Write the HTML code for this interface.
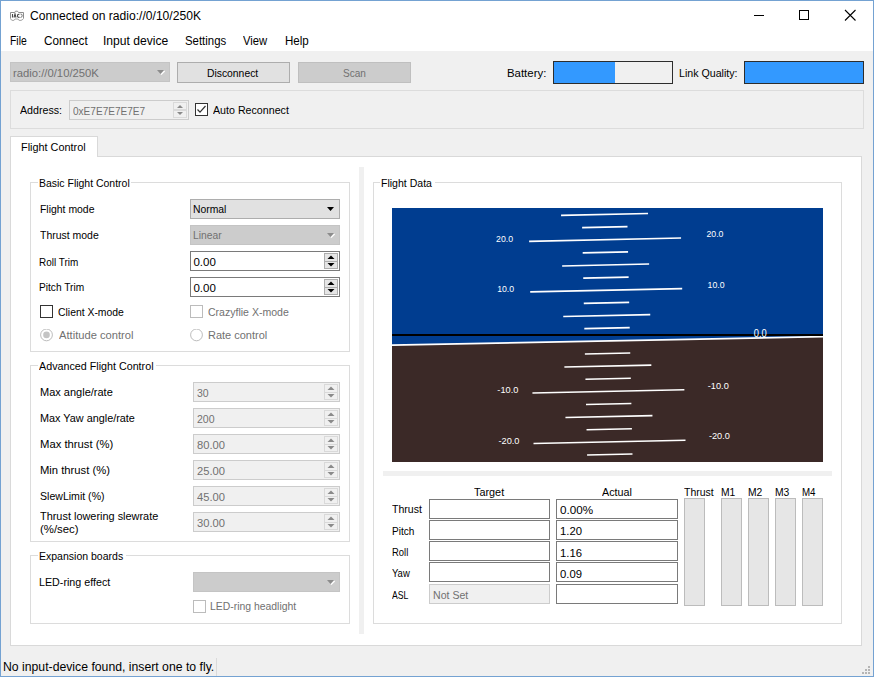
<!DOCTYPE html>
<html><head><meta charset="utf-8"><style>
html,body{margin:0;padding:0;}
body{width:874px;height:677px;position:relative;overflow:hidden;background:#f0f0f0;font-family:"Liberation Sans",sans-serif;}
.a{position:absolute;}
.t{position:absolute;white-space:nowrap;line-height:1;transform-origin:0 0;}
</style></head><body>
<div class="a" style="left:0px;top:0px;width:874px;height:51px;background:#ffffff;"></div>
<svg class="a" style="left:9px;top:10px" width="16" height="12" viewBox="0 0 16 12">
<path d="M1.5 8.5 V2.5 H5.5 L6.5 1.2 H8.5 L9.5 2.5 H14.5 V8.5" fill="none" stroke="#8d8d8d" stroke-width="1"/>
<path d="M1.5 8.5 Q2 10.5 4 10.5 Q5.5 10.5 6 9 H9 Q9.5 10.5 11 10.5 Q13.5 10.5 14.5 8.5" fill="none" stroke="#a5a5a5" stroke-width="1"/>
<path d="M3.5 4 V7.5 M5 7.5 L6 4 L7 7.5 M10.5 4.2 Q8.5 4 8.5 5.8 Q8.5 7.6 10.5 7.4" fill="none" stroke="#4a4a4a" stroke-width="1.1"/>
<path d="M11.5 4 Q13.5 4 13.2 5.8 Q13 7.5 11.5 7.5" fill="none" stroke="#777" stroke-width="1"/>
</svg>
<span class="t" style="left:30.00px;top:10.00px;font-size:12px;color:#000;transform:scaleX(1.0091);">Connected on radio://0/10/250K</span>
<div class="a" style="left:754px;top:15px;width:10px;height:1px;background:#000;"></div>
<div class="a" style="left:799px;top:10px;width:10px;height:10px;background:transparent;border:1px solid #000;box-sizing:border-box;"></div>
<svg class="a" style="left:844px;top:9px" width="13" height="13" viewBox="0 0 13 13">
<path d="M1 1 L11.5 11.5 M11.5 1 L1 11.5" stroke="#000" stroke-width="1.1"/></svg>
<span class="t" style="left:10.00px;top:35.00px;font-size:12px;color:#000;transform:scaleX(0.8646);">File</span>
<span class="t" style="left:43.60px;top:35.00px;font-size:12px;color:#000;transform:scaleX(0.9766);">Connect</span>
<span class="t" style="left:103.39px;top:35.00px;font-size:12px;color:#000;transform:scaleX(1.0088);">Input device</span>
<span class="t" style="left:185.40px;top:35.00px;font-size:12px;color:#000;transform:scaleX(0.9502);">Settings</span>
<span class="t" style="left:243.30px;top:35.00px;font-size:12px;color:#000;transform:scaleX(0.9377);">View</span>
<span class="t" style="left:284.50px;top:35.00px;font-size:12px;color:#000;transform:scaleX(0.9638);">Help</span>
<div class="a" style="left:10px;top:62px;width:160px;height:20px;background:#cccccc;border:1px solid #c4c4c4;box-sizing:border-box;"></div>
<span class="t" style="left:13.30px;top:68.00px;font-size:11.5px;color:#717171;transform:scaleX(0.9804);">radio://0/10/250K</span>
<svg class="a" style="left:157px;top:70px" width="9" height="6"><path d="M0 0 H7 L3.5 4 Z" fill="#8c8c8c"/><path d="M4 4.6 L7.6 1" stroke="#fff" stroke-width="1.3"/></svg>
<div class="a" style="left:177px;top:62px;width:113px;height:21px;background:#e1e1e1;border:1px solid #adadad;box-sizing:border-box;"></div>
<span class="t" style="left:206.60px;top:68.00px;font-size:11.5px;color:#000;transform:scaleX(0.8996);">Disconnect</span>
<div class="a" style="left:298px;top:62px;width:113px;height:21px;background:#cccccc;border:1px solid #bfbfbf;box-sizing:border-box;"></div>
<span class="t" style="left:342.50px;top:68.00px;font-size:11.5px;color:#717171;transform:scaleX(0.8754);">Scan</span>
<span class="t" style="left:506.50px;top:68.00px;font-size:11.5px;color:#000;transform:scaleX(0.9916);">Battery:</span>
<div class="a" style="left:553px;top:61px;width:120px;height:23px;background:#f0f0f0;border:1px solid #2d2d2d;box-sizing:border-box;"></div>
<div class="a" style="left:554px;top:62px;width:61px;height:21px;background:#3399ff;"></div>
<span class="t" style="left:678.60px;top:68.00px;font-size:11.5px;color:#000;transform:scaleX(0.9242);">Link Quality:</span>
<div class="a" style="left:744px;top:61px;width:120px;height:23px;background:#3399ff;border:1px solid #2d2d2d;box-sizing:border-box;"></div>
<div class="a" style="left:10px;top:90px;width:854px;height:39px;background:transparent;border:1px solid #dcdcdc;box-sizing:border-box;"></div>
<span class="t" style="left:19.90px;top:105.00px;font-size:11.5px;color:#000;transform:scaleX(0.9273);">Address:</span>
<div class="a" style="left:69px;top:100px;width:120px;height:20px;background:#f0f0f0;border:1px solid #cccccc;box-sizing:border-box;"></div>
<span class="t" style="left:72.80px;top:106.00px;font-size:11.5px;color:#717171;transform:scaleX(0.8747);">0xE7E7E7E7E7</span>
<div class="a" style="left:173px;top:102px;width:14px;height:8px;box-sizing:border-box;border:1px solid #dadada;"></div>
<div class="a" style="left:173px;top:110px;width:14px;height:8px;box-sizing:border-box;border:1px solid #dadada;"></div>
<svg class="a" style="left:173px;top:102px" width="14" height="16"><path d="M4 6 L7 3 L10 6 Z" fill="#8a8a8a"/><path d="M4 10 L10 10 L7 13 Z" fill="#8a8a8a"/></svg>
<div class="a" style="left:195px;top:103px;width:13px;height:13px;background:#ffffff;border:1px solid #333333;box-sizing:border-box;"></div>
<svg class="a" style="left:195px;top:103px" width="13" height="13"><path d="M2.5 6.5 L5 9.2 L10.5 3" fill="none" stroke="#333" stroke-width="1.2"/></svg>
<span class="t" style="left:213.00px;top:105.00px;font-size:11.5px;color:#000;transform:scaleX(0.9270);">Auto Reconnect</span>
<div class="a" style="left:10px;top:156px;width:852px;height:490px;background:#ffffff;border:1px solid #d9d9d9;box-sizing:border-box;"></div>
<div class="a" style="left:10px;top:136px;width:88px;height:21px;background:#ffffff;border:1px solid #d9d9d9;box-sizing:border-box;border-bottom:none;"></div>
<span class="t" style="left:21.30px;top:142.00px;font-size:11.5px;color:#000;transform:scaleX(0.9450);">Flight Control</span>
<div class="a" style="left:359px;top:167px;width:5px;height:467px;background:#f0f0f0;"></div>
<div class="a" style="left:30px;top:182px;width:320px;height:170px;background:transparent;border:1px solid #dcdcdc;box-sizing:border-box;"></div>
<div class="a" style="left:38px;top:180px;width:93px;height:4px;background:#ffffff;"></div>
<span class="t" style="left:38.50px;top:178.00px;font-size:11.5px;color:#000;transform:scaleX(0.9097);">Basic Flight Control</span>
<div class="a" style="left:30px;top:365px;width:320px;height:177px;background:transparent;border:1px solid #dcdcdc;box-sizing:border-box;"></div>
<div class="a" style="left:38px;top:363px;width:118px;height:4px;background:#ffffff;"></div>
<span class="t" style="left:39.00px;top:361.00px;font-size:11.5px;color:#000;transform:scaleX(0.9331);">Advanced Flight Control</span>
<div class="a" style="left:30px;top:555px;width:320px;height:69px;background:transparent;border:1px solid #dcdcdc;box-sizing:border-box;"></div>
<div class="a" style="left:38px;top:553px;width:88px;height:4px;background:#ffffff;"></div>
<span class="t" style="left:38.60px;top:551.00px;font-size:11.5px;color:#000;transform:scaleX(0.9143);">Expansion boards</span>
<div class="a" style="left:373px;top:182px;width:469px;height:442px;background:transparent;border:1px solid #dcdcdc;box-sizing:border-box;"></div>
<div class="a" style="left:380px;top:180px;width:55px;height:4px;background:#ffffff;"></div>
<span class="t" style="left:381.40px;top:178.00px;font-size:11.5px;color:#000;transform:scaleX(0.9162);">Flight Data</span>
<span class="t" style="left:39.60px;top:204.00px;font-size:11.5px;color:#000;transform:scaleX(0.9064);">Flight mode</span>
<span class="t" style="left:40.20px;top:230.00px;font-size:11.5px;color:#000;transform:scaleX(0.9103);">Thrust mode</span>
<span class="t" style="left:39.40px;top:257.00px;font-size:11.5px;color:#000;transform:scaleX(0.8647);">Roll Trim</span>
<span class="t" style="left:39.40px;top:282.00px;font-size:11.5px;color:#000;transform:scaleX(0.8829);">Pitch Trim</span>
<div class="a" style="left:190px;top:199px;width:150px;height:20px;background:#e1e1e1;border:1px solid #adadad;box-sizing:border-box;"></div>
<span class="t" style="left:193.40px;top:204.00px;font-size:11.5px;color:#000;transform:scaleX(0.9012);">Normal</span>
<svg class="a" style="left:327px;top:207px" width="8" height="5"><path d="M0 0 H7 L3.5 4 Z" fill="#000"/></svg>
<div class="a" style="left:190px;top:225px;width:150px;height:20px;background:#cccccc;border:1px solid #c4c4c4;box-sizing:border-box;"></div>
<span class="t" style="left:193.40px;top:230.00px;font-size:11.5px;color:#717171;transform:scaleX(0.8961);">Linear</span>
<svg class="a" style="left:327px;top:233px" width="9" height="6"><path d="M0 0 H7 L3.5 4 Z" fill="#8c8c8c"/><path d="M4 4.6 L7.6 1" stroke="#fff" stroke-width="1.3"/></svg>
<div class="a" style="left:190px;top:251px;width:150px;height:20px;background:#ffffff;border:1px solid #7a7a7a;box-sizing:border-box;"></div>
<span class="t" style="left:193.40px;top:257.00px;font-size:11.5px;color:#000;">0.00</span>
<div class="a" style="left:324px;top:253px;width:14px;height:9px;box-sizing:border-box;border:1px solid #adadad;background:#e5e5e5"></div>
<div class="a" style="left:324px;top:261px;width:14px;height:8px;box-sizing:border-box;border:1px solid #adadad;background:#e5e5e5"></div>
<svg class="a" style="left:324px;top:253px" width="14" height="16"><path d="M3.5 6 L7 2.5 L10.5 6 Z" fill="#000"/><path d="M3.5 10 L10.5 10 L7 13.5 Z" fill="#000"/></svg>
<div class="a" style="left:190px;top:277px;width:150px;height:20px;background:#ffffff;border:1px solid #7a7a7a;box-sizing:border-box;"></div>
<span class="t" style="left:193.40px;top:283.00px;font-size:11.5px;color:#000;">0.00</span>
<div class="a" style="left:324px;top:279px;width:14px;height:9px;box-sizing:border-box;border:1px solid #adadad;background:#e5e5e5"></div>
<div class="a" style="left:324px;top:287px;width:14px;height:8px;box-sizing:border-box;border:1px solid #adadad;background:#e5e5e5"></div>
<svg class="a" style="left:324px;top:279px" width="14" height="16"><path d="M3.5 6 L7 2.5 L10.5 6 Z" fill="#000"/><path d="M3.5 10 L10.5 10 L7 13.5 Z" fill="#000"/></svg>
<div class="a" style="left:40px;top:305px;width:13px;height:13px;background:#ffffff;border:1px solid #333333;box-sizing:border-box;"></div>
<span class="t" style="left:57.50px;top:307.00px;font-size:11.5px;color:#000;transform:scaleX(0.9039);">Client X-mode</span>
<div class="a" style="left:190px;top:305px;width:13px;height:13px;background:#ffffff;border:1px solid #bcbcbc;box-sizing:border-box;"></div>
<span class="t" style="left:207.60px;top:307.00px;font-size:11.5px;color:#717171;transform:scaleX(0.9157);">Crazyflie X-mode</span>
<svg class="a" style="left:40px;top:329px" width="13" height="13"><circle cx="6.5" cy="5.9" r="5.9" fill="#fff" stroke="#bcbcbc" stroke-width="1"/><circle cx="6.5" cy="5.9" r="3.3" fill="#c4c4c4"/></svg>
<span class="t" style="left:59.00px;top:330.00px;font-size:11.5px;color:#717171;transform:scaleX(0.9717);">Attitude control</span>
<svg class="a" style="left:190px;top:329px" width="13" height="13"><circle cx="6.5" cy="5.9" r="5.9" fill="#fff" stroke="#bcbcbc" stroke-width="1"/></svg>
<span class="t" style="left:208.30px;top:330.00px;font-size:11.5px;color:#717171;transform:scaleX(0.9553);">Rate control</span>
<span class="t" style="left:39.60px;top:387.00px;font-size:11.5px;color:#000;transform:scaleX(0.9567);">Max angle/rate</span>
<div class="a" style="left:193px;top:382px;width:147px;height:20px;background:#f0f0f0;border:1px solid #cccccc;box-sizing:border-box;"></div>
<span class="t" style="left:196.80px;top:388.00px;font-size:11.5px;color:#717171;transform:scaleX(0.9116);">30</span>
<div class="a" style="left:324px;top:384px;width:14px;height:9px;box-sizing:border-box;border:1px solid #d9d9d9;background:#f0f0f0"></div>
<div class="a" style="left:324px;top:392px;width:14px;height:8px;box-sizing:border-box;border:1px solid #d9d9d9;background:#f0f0f0"></div>
<svg class="a" style="left:324px;top:384px" width="14" height="16"><path d="M3.5 6 L7 2.5 L10.5 6 Z" fill="#8a8a8a"/><path d="M3.5 10 L10.5 10 L7 13.5 Z" fill="#8a8a8a"/></svg>
<span class="t" style="left:39.60px;top:413.00px;font-size:11.5px;color:#000;transform:scaleX(0.9434);">Max Yaw angle/rate</span>
<div class="a" style="left:193px;top:408px;width:147px;height:20px;background:#f0f0f0;border:1px solid #cccccc;box-sizing:border-box;"></div>
<span class="t" style="left:196.80px;top:414.00px;font-size:11.5px;color:#717171;transform:scaleX(0.9153);">200</span>
<div class="a" style="left:324px;top:410px;width:14px;height:9px;box-sizing:border-box;border:1px solid #d9d9d9;background:#f0f0f0"></div>
<div class="a" style="left:324px;top:418px;width:14px;height:8px;box-sizing:border-box;border:1px solid #d9d9d9;background:#f0f0f0"></div>
<svg class="a" style="left:324px;top:410px" width="14" height="16"><path d="M3.5 6 L7 2.5 L10.5 6 Z" fill="#8a8a8a"/><path d="M3.5 10 L10.5 10 L7 13.5 Z" fill="#8a8a8a"/></svg>
<span class="t" style="left:39.60px;top:439.00px;font-size:11.5px;color:#000;transform:scaleX(0.9796);">Max thrust (%)</span>
<div class="a" style="left:193px;top:434px;width:147px;height:20px;background:#f0f0f0;border:1px solid #cccccc;box-sizing:border-box;"></div>
<span class="t" style="left:196.80px;top:440.00px;font-size:11.5px;color:#717171;transform:scaleX(0.9724);">80.00</span>
<div class="a" style="left:324px;top:436px;width:14px;height:9px;box-sizing:border-box;border:1px solid #d9d9d9;background:#f0f0f0"></div>
<div class="a" style="left:324px;top:444px;width:14px;height:8px;box-sizing:border-box;border:1px solid #d9d9d9;background:#f0f0f0"></div>
<svg class="a" style="left:324px;top:436px" width="14" height="16"><path d="M3.5 6 L7 2.5 L10.5 6 Z" fill="#8a8a8a"/><path d="M3.5 10 L10.5 10 L7 13.5 Z" fill="#8a8a8a"/></svg>
<span class="t" style="left:39.60px;top:465.00px;font-size:11.5px;color:#000;transform:scaleX(0.9772);">Min thrust (%)</span>
<div class="a" style="left:193px;top:460px;width:147px;height:20px;background:#f0f0f0;border:1px solid #cccccc;box-sizing:border-box;"></div>
<span class="t" style="left:196.80px;top:466.00px;font-size:11.5px;color:#717171;transform:scaleX(0.9724);">25.00</span>
<div class="a" style="left:324px;top:462px;width:14px;height:9px;box-sizing:border-box;border:1px solid #d9d9d9;background:#f0f0f0"></div>
<div class="a" style="left:324px;top:470px;width:14px;height:8px;box-sizing:border-box;border:1px solid #d9d9d9;background:#f0f0f0"></div>
<svg class="a" style="left:324px;top:462px" width="14" height="16"><path d="M3.5 6 L7 2.5 L10.5 6 Z" fill="#8a8a8a"/><path d="M3.5 10 L10.5 10 L7 13.5 Z" fill="#8a8a8a"/></svg>
<span class="t" style="left:39.60px;top:491.00px;font-size:11.5px;color:#000;transform:scaleX(0.9183);">SlewLimit (%)</span>
<div class="a" style="left:193px;top:486px;width:147px;height:20px;background:#f0f0f0;border:1px solid #cccccc;box-sizing:border-box;"></div>
<span class="t" style="left:196.80px;top:492.00px;font-size:11.5px;color:#717171;transform:scaleX(0.9724);">45.00</span>
<div class="a" style="left:324px;top:488px;width:14px;height:9px;box-sizing:border-box;border:1px solid #d9d9d9;background:#f0f0f0"></div>
<div class="a" style="left:324px;top:496px;width:14px;height:8px;box-sizing:border-box;border:1px solid #d9d9d9;background:#f0f0f0"></div>
<svg class="a" style="left:324px;top:488px" width="14" height="16"><path d="M3.5 6 L7 2.5 L10.5 6 Z" fill="#8a8a8a"/><path d="M3.5 10 L10.5 10 L7 13.5 Z" fill="#8a8a8a"/></svg>
<span class="t" style="left:39.60px;top:511.00px;font-size:11.5px;color:#000;transform:scaleX(0.9490);">Thrust lowering slewrate</span>
<span class="t" style="left:39.60px;top:524.00px;font-size:11.5px;color:#000;transform:scaleX(0.9886);">(%/sec)</span>
<div class="a" style="left:193px;top:512px;width:147px;height:20px;background:#f0f0f0;border:1px solid #cccccc;box-sizing:border-box;"></div>
<span class="t" style="left:196.80px;top:518.00px;font-size:11.5px;color:#717171;transform:scaleX(0.9724);">30.00</span>
<div class="a" style="left:324px;top:514px;width:14px;height:9px;box-sizing:border-box;border:1px solid #d9d9d9;background:#f0f0f0"></div>
<div class="a" style="left:324px;top:522px;width:14px;height:8px;box-sizing:border-box;border:1px solid #d9d9d9;background:#f0f0f0"></div>
<svg class="a" style="left:324px;top:514px" width="14" height="16"><path d="M3.5 6 L7 2.5 L10.5 6 Z" fill="#8a8a8a"/><path d="M3.5 10 L10.5 10 L7 13.5 Z" fill="#8a8a8a"/></svg>
<span class="t" style="left:39.40px;top:577.00px;font-size:11.5px;color:#000;transform:scaleX(0.9315);">LED-ring effect</span>
<div class="a" style="left:193px;top:572px;width:147px;height:20px;background:#cccccc;border:1px solid #c4c4c4;box-sizing:border-box;"></div>
<svg class="a" style="left:327px;top:580px" width="9" height="6"><path d="M0 0 H7 L3.5 4 Z" fill="#8c8c8c"/><path d="M4 4.6 L7.6 1" stroke="#fff" stroke-width="1.3"/></svg>
<div class="a" style="left:193px;top:600px;width:13px;height:13px;background:#ffffff;border:1px solid #bcbcbc;box-sizing:border-box;"></div>
<span class="t" style="left:210.30px;top:601.00px;font-size:11.5px;color:#717171;transform:scaleX(0.9047);">LED-ring headlight</span>
<svg class="a" style="left:392px;top:208px" width="431" height="254" viewBox="0 0 431 254">
<rect x="0" y="0" width="431" height="254" fill="#003d90"/>
<polygon points="-20.00,137.61 451.00,128.29 451,274 -20,274" fill="#3b2927"/>
<line x1="-20.00" y1="137.61" x2="451.00" y2="128.29" stroke="#ffffff" stroke-width="1.8"/>
<rect x="0" y="126" width="431" height="2" fill="#000"/>
<line x1="195.09" y1="247.01" x2="240.48" y2="246.02" stroke="#ffffff" stroke-width="1.6"/>
<line x1="141.52" y1="235.53" x2="293.49" y2="232.22" stroke="#ffffff" stroke-width="1.6"/>
<text x="116.95" y="235.77" font-family="Liberation Sans" font-size="9.5" fill="#fff" text-anchor="middle" textLength="21" lengthAdjust="spacingAndGlyphs">-20.0</text>
<text x="327.40" y="231.18" font-family="Liberation Sans" font-size="9.5" fill="#fff" text-anchor="middle" textLength="21" lengthAdjust="spacingAndGlyphs">-20.0</text>
<line x1="194.54" y1="221.74" x2="239.92" y2="220.75" stroke="#ffffff" stroke-width="1.6"/>
<line x1="173.46" y1="209.56" x2="260.44" y2="207.66" stroke="#ffffff" stroke-width="1.6"/>
<line x1="193.98" y1="196.47" x2="239.37" y2="195.48" stroke="#ffffff" stroke-width="1.6"/>
<line x1="140.42" y1="185.00" x2="292.38" y2="181.68" stroke="#ffffff" stroke-width="1.6"/>
<text x="115.85" y="185.23" font-family="Liberation Sans" font-size="9.5" fill="#fff" text-anchor="middle" textLength="21" lengthAdjust="spacingAndGlyphs">-10.0</text>
<text x="326.30" y="180.64" font-family="Liberation Sans" font-size="9.5" fill="#fff" text-anchor="middle" textLength="21" lengthAdjust="spacingAndGlyphs">-10.0</text>
<line x1="193.43" y1="171.20" x2="238.82" y2="170.21" stroke="#ffffff" stroke-width="1.6"/>
<line x1="172.36" y1="159.02" x2="259.34" y2="157.12" stroke="#ffffff" stroke-width="1.6"/>
<line x1="192.88" y1="145.93" x2="238.27" y2="144.94" stroke="#ffffff" stroke-width="1.6"/>
<line x1="192.33" y1="120.66" x2="237.72" y2="119.67" stroke="#ffffff" stroke-width="1.6"/>
<line x1="171.26" y1="108.48" x2="258.24" y2="106.58" stroke="#ffffff" stroke-width="1.6"/>
<line x1="191.78" y1="95.39" x2="237.17" y2="94.40" stroke="#ffffff" stroke-width="1.6"/>
<line x1="138.22" y1="83.92" x2="290.18" y2="80.60" stroke="#ffffff" stroke-width="1.6"/>
<text x="113.64" y="84.16" font-family="Liberation Sans" font-size="9.5" fill="#fff" text-anchor="middle" textLength="17" lengthAdjust="spacingAndGlyphs">10.0</text>
<text x="324.09" y="79.56" font-family="Liberation Sans" font-size="9.5" fill="#fff" text-anchor="middle" textLength="17" lengthAdjust="spacingAndGlyphs">10.0</text>
<line x1="191.23" y1="70.12" x2="236.62" y2="69.13" stroke="#ffffff" stroke-width="1.6"/>
<line x1="170.16" y1="57.94" x2="257.14" y2="56.04" stroke="#ffffff" stroke-width="1.6"/>
<line x1="190.68" y1="44.85" x2="236.06" y2="43.86" stroke="#ffffff" stroke-width="1.6"/>
<line x1="137.11" y1="33.38" x2="289.08" y2="30.07" stroke="#ffffff" stroke-width="1.6"/>
<text x="112.54" y="33.62" font-family="Liberation Sans" font-size="9.5" fill="#fff" text-anchor="middle" textLength="17" lengthAdjust="spacingAndGlyphs">20.0</text>
<text x="322.99" y="29.03" font-family="Liberation Sans" font-size="9.5" fill="#fff" text-anchor="middle" textLength="17" lengthAdjust="spacingAndGlyphs">20.0</text>
<line x1="190.12" y1="19.58" x2="235.51" y2="18.59" stroke="#ffffff" stroke-width="1.6"/>
<line x1="169.05" y1="7.40" x2="256.03" y2="5.51" stroke="#ffffff" stroke-width="1.6"/>
<text x="368.19" y="129.46" font-family="Liberation Sans" font-size="10" fill="#fff" text-anchor="middle" textLength="13" lengthAdjust="spacingAndGlyphs">0.0</text>
</svg>
<div class="a" style="left:383px;top:471px;width:449px;height:5px;background:#f0f0f0;"></div>
<span class="t" style="left:473.70px;top:487.00px;font-size:11.5px;color:#000;transform:scaleX(0.9430);">Target</span>
<span class="t" style="left:601.80px;top:487.00px;font-size:11.5px;color:#000;transform:scaleX(0.9361);">Actual</span>
<div class="a" style="left:429px;top:499px;width:121px;height:20px;background:#ffffff;border:1px solid #7a7a7a;box-sizing:border-box;"></div>
<div class="a" style="left:556px;top:499px;width:122px;height:20px;background:#ffffff;border:1px solid #7a7a7a;box-sizing:border-box;"></div>
<span class="t" style="left:392.00px;top:504.00px;font-size:11.5px;color:#000;transform:scaleX(0.9163);">Thrust</span>
<span class="t" style="left:559.60px;top:505.00px;font-size:11.5px;color:#000;transform:scaleX(1.0160);">0.00%</span>
<div class="a" style="left:429px;top:520px;width:121px;height:20px;background:#ffffff;border:1px solid #7a7a7a;box-sizing:border-box;"></div>
<div class="a" style="left:556px;top:520px;width:122px;height:20px;background:#ffffff;border:1px solid #7a7a7a;box-sizing:border-box;"></div>
<span class="t" style="left:392.00px;top:526.00px;font-size:11.5px;color:#000;transform:scaleX(0.8740);">Pitch</span>
<span class="t" style="left:559.60px;top:526.00px;font-size:11.5px;color:#000;transform:scaleX(0.9824);">1.20</span>
<div class="a" style="left:429px;top:541px;width:121px;height:20px;background:#ffffff;border:1px solid #7a7a7a;box-sizing:border-box;"></div>
<div class="a" style="left:556px;top:541px;width:122px;height:20px;background:#ffffff;border:1px solid #7a7a7a;box-sizing:border-box;"></div>
<span class="t" style="left:392.00px;top:547.00px;font-size:11.5px;color:#000;transform:scaleX(0.8205);">Roll</span>
<span class="t" style="left:559.60px;top:548.00px;font-size:11.5px;color:#000;transform:scaleX(0.9824);">1.16</span>
<div class="a" style="left:429px;top:562px;width:121px;height:20px;background:#ffffff;border:1px solid #7a7a7a;box-sizing:border-box;"></div>
<div class="a" style="left:556px;top:562px;width:122px;height:20px;background:#ffffff;border:1px solid #7a7a7a;box-sizing:border-box;"></div>
<span class="t" style="left:392.00px;top:568.00px;font-size:11.5px;color:#000;transform:scaleX(0.8239);">Yaw</span>
<span class="t" style="left:559.60px;top:569.00px;font-size:11.5px;color:#000;transform:scaleX(0.9824);">0.09</span>
<span class="t" style="left:392.00px;top:590.00px;font-size:11.5px;color:#000;transform:scaleX(0.7520);">ASL</span>
<div class="a" style="left:429px;top:584px;width:121px;height:20px;background:#f0f0f0;border:1px solid #cccccc;box-sizing:border-box;"></div>
<span class="t" style="left:432.50px;top:590.00px;font-size:11.5px;color:#717171;transform:scaleX(0.9194);">Not Set</span>
<div class="a" style="left:556px;top:584px;width:122px;height:20px;background:#ffffff;border:1px solid #7a7a7a;box-sizing:border-box;"></div>
<span class="t" style="left:684.20px;top:487.00px;font-size:11.5px;color:#000;transform:scaleX(0.9103);">Thrust</span>
<span class="t" style="left:721.00px;top:487.00px;font-size:11.5px;color:#000;transform:scaleX(0.8986);">M1</span>
<span class="t" style="left:748.00px;top:487.00px;font-size:11.5px;color:#000;transform:scaleX(0.8986);">M2</span>
<span class="t" style="left:775.00px;top:487.00px;font-size:11.5px;color:#000;transform:scaleX(0.8986);">M3</span>
<span class="t" style="left:802.00px;top:487.00px;font-size:11.5px;color:#000;transform:scaleX(0.8444);">M4</span>
<div class="a" style="left:684px;top:498px;width:21px;height:108px;background:#e6e6e6;border:1px solid #bcbcbc;box-sizing:border-box;"></div>
<div class="a" style="left:721px;top:498px;width:21px;height:108px;background:#e6e6e6;border:1px solid #bcbcbc;box-sizing:border-box;"></div>
<div class="a" style="left:748px;top:498px;width:21px;height:108px;background:#e6e6e6;border:1px solid #bcbcbc;box-sizing:border-box;"></div>
<div class="a" style="left:775px;top:498px;width:21px;height:108px;background:#e6e6e6;border:1px solid #bcbcbc;box-sizing:border-box;"></div>
<div class="a" style="left:802px;top:498px;width:21px;height:108px;background:#e6e6e6;border:1px solid #bcbcbc;box-sizing:border-box;"></div>
<span class="t" style="left:3.30px;top:661.00px;font-size:12px;color:#000;transform:scaleX(1.0194);">No input-device found, insert one to fly.</span>
<div class="a" style="left:216px;top:658px;width:1px;height:18px;background:#dadada;"></div>
<div class="a" style="left:868px;top:666px;width:2px;height:2px;background:#b5b5b5;"></div>
<div class="a" style="left:865px;top:669px;width:2px;height:2px;background:#b5b5b5;"></div>
<div class="a" style="left:868px;top:669px;width:2px;height:2px;background:#b5b5b5;"></div>
<div class="a" style="left:862px;top:672px;width:2px;height:2px;background:#b5b5b5;"></div>
<div class="a" style="left:865px;top:672px;width:2px;height:2px;background:#b5b5b5;"></div>
<div class="a" style="left:868px;top:672px;width:2px;height:2px;background:#b5b5b5;"></div>
<div class="a" style="left:0;top:0;width:874px;height:677px;box-sizing:border-box;border:1px solid #74a2d2;"></div>
</body></html>
